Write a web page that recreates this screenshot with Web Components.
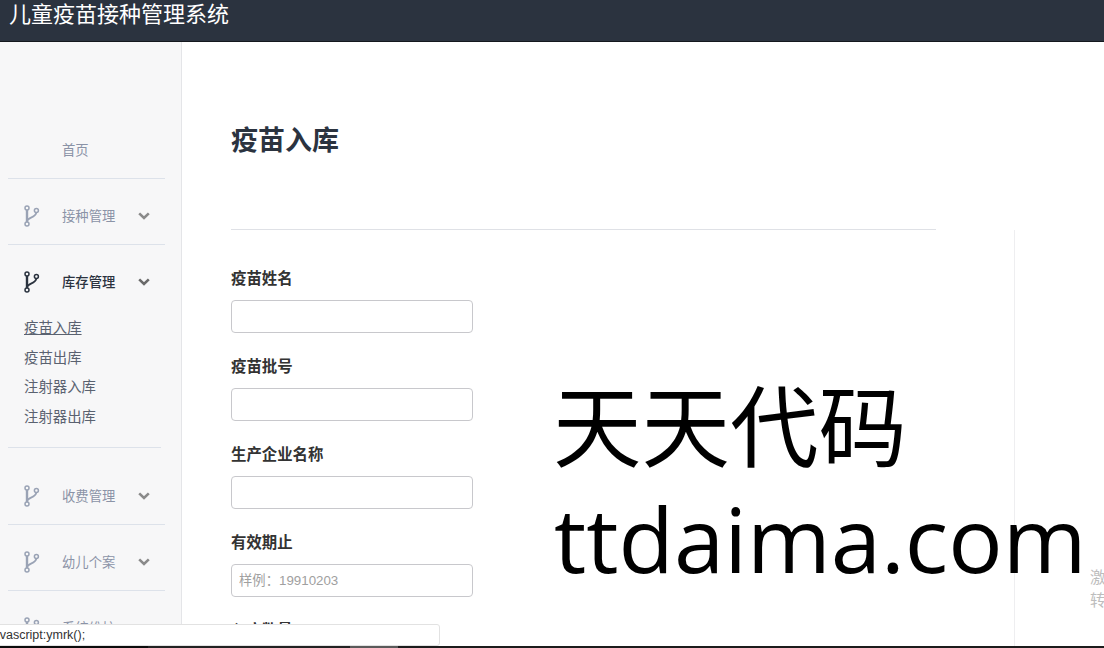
<!DOCTYPE html>
<html lang="zh">
<head>
<meta charset="utf-8">
<title>儿童疫苗接种管理系统</title>
<style>
  html, body { margin: 0; height: 100%; overflow: hidden; background: #fff; }
  body { font-family: "Liberation Sans", "Noto Sans CJK SC", sans-serif; }
</style>
</head>
<body>
<app-shell>
  <top-bar slot="top">儿童疫苗接种管理系统</top-bar>
  <side-nav slot="side">
    <nav-group label="首页" plain></nav-group>
    <nav-group label="接种管理"></nav-group>
    <nav-group label="库存管理" open>
      <a href="#" class="cur">疫苗入库</a>
      <a href="#">疫苗出库</a>
      <a href="#">注射器入库</a>
      <a href="#">注射器出库</a>
    </nav-group>
    <nav-group label="收费管理" spaced low></nav-group>
    <nav-group label="幼儿个案" low></nav-group>
    <nav-group label="系统维护" last low></nav-group>
  </side-nav>
  <stock-form slot="main" heading="疫苗入库">
    <form-field label="疫苗姓名"></form-field>
    <form-field label="疫苗批号"></form-field>
    <form-field label="生产企业名称"></form-field>
    <form-field label="有效期止" placeholder="样例：19910203"></form-field>
    <form-field label="入库数量"></form-field>
  </stock-form>
  <side-note slot="main">激活<br>转到</side-note>
  <water-mark slot="over"></water-mark>
  <status-tip slot="over">javascript:ymrk();</status-tip>
</app-shell>

<script>
const CJK = '"Liberation Sans", "Noto Sans CJK SC", sans-serif';

class AppShell extends HTMLElement {
  constructor() {
    super();
    this.attachShadow({ mode: 'open' });
    this.shadowRoot.innerHTML = `
      <style>
        :host { display: grid; grid-template-rows: 42px 604px 2px; grid-template-columns: 182px 1fr; width: 1104px; height: 648px; overflow: hidden; position: relative; }
        .top { grid-column: 1 / 3; }
        .main { display: flex; min-width: 0; overflow: hidden; }
        /* dark strip along the bottom of the window */
        .edge { grid-column: 1 / 3; background: linear-gradient(to right, #0c0c0c 0, #0c0c0c 148px, #222 148px, #222 350px, #5a5a5a 350px, #5a5a5a 398px, #1c1c1c 398px, #1c1c1c 100%); }
      </style>
      <div class="top"><slot name="top"></slot></div>
      <slot name="side"></slot>
      <div class="main"><slot name="main"></slot></div>
      <div class="edge"></div>
      <slot name="over"></slot>
    `;
  }
}

class TopBar extends HTMLElement {
  constructor() {
    super();
    this.attachShadow({ mode: 'open' });
    this.shadowRoot.innerHTML = `
      <style>
        :host { display: block; height: 42px; box-sizing: border-box; background: #2b333f; border-bottom: 1px solid #14181e; color: #fff; font: 22px/30px ${CJK}; padding-left: 9px; }
      </style>
      <slot></slot>
    `;
  }
}

class SideNav extends HTMLElement {
  constructor() {
    super();
    this.attachShadow({ mode: 'open' });
    this.shadowRoot.innerHTML = `
      <style>
        :host { display: block; box-sizing: border-box; width: 182px; height: 604px; background: #f7f7f8; border-right: 1px solid #e4e5e8; padding-top: 71px; overflow: hidden; }
      </style>
      <slot></slot>
    `;
  }
}

class NavGroup extends HTMLElement {
  constructor() {
    super();
    this.attachShadow({ mode: 'open' });
    const open = this.hasAttribute('open');
    const plain = this.hasAttribute('plain');
    const branch = `
      <svg width="16" height="22" viewBox="0 0 16 22" fill="none" stroke="currentColor" stroke-width="1.5">
        <circle cx="3" cy="3" r="2"/><circle cx="3" cy="19" r="2"/><circle cx="12.4" cy="5.4" r="2"/>
        <path d="M3 5v12" stroke-width="2.4"/><path d="M3 16c.8-3.8 8.6-3 9.4-8.6" stroke-width="1.8"/>
      </svg>`;
    const chevron = `
      <svg width="12" height="8" viewBox="0 0 12 8" fill="none" stroke="currentColor" stroke-width="2.6">
        <path d="M1.2 1.4L6 6l4.8-4.6"/>
      </svg>`;
    this.shadowRoot.innerHTML = `
      <style>
        :host { display: block; margin: 0 16px 0 8px; color: #8b93a7; border-bottom: 1px solid #dde2ea; }
        :host([open]) { color: #2b333f; margin-right: 20px; }
        :host([spaced]) { padding-top: 11px; }
        :host([last]) { border-bottom: 0; }
        .row { display: flex; align-items: center; height: 65px; padding-top: 9px; box-sizing: border-box; font-size: 13.33px; }
        .lab { flex: 1; margin-bottom: 2px; }
        :host([low]) .lab { margin-bottom: 0; }
        :host([open]) .lab { font-weight: 500; }
        .ico { width: 54px; padding-left: 16px; box-sizing: border-box; display: flex; color: #9aa3b5; }
        :host([open]) .ico { color: #2b333f; }
        .chev { color: #8a8a8a; margin-right: ${open ? 11 : 15}px; display: flex; }
        :host([open]) .chev { color: #6a6a6a; }
        .subs { display: ${open ? 'flex' : 'none'}; flex-direction: column; padding: 0 0 14px 16px; margin-top: 4px; }
        ::slotted(a) { font-size: 14.4px; line-height: 29.7px; color: #5a6270; text-decoration: none; }
        ::slotted(a.cur) { text-decoration: underline; }
      </style>
      <div class="row">
        <span class="ico">${plain ? '' : branch}</span>
        <span class="lab">${this.getAttribute('label')}</span>
        ${plain ? '' : `<span class="chev">${chevron}</span>`}
      </div>
      <div class="subs"><slot></slot></div>
    `;
  }
}

class StockForm extends HTMLElement {
  constructor() {
    super();
    this.attachShadow({ mode: 'open' });
    this.shadowRoot.innerHTML = `
      <style>
        :host { display: block; box-sizing: border-box; width: 832px; height: 604px; padding: 0 78px 0 49px; flex: none; overflow: hidden; }
        h1 { margin: 0; padding-top: 82px; height: 105px; font: bold 27px/34px ${CJK}; color: #2b333f; border-bottom: 1px solid #dfe1e6; }
        .fields { display: flex; flex-direction: column; gap: 24px; padding-top: 39px; }
      </style>
      <h1>${this.getAttribute('heading')}</h1>
      <div class="fields"><slot></slot></div>
    `;
  }
}

class FormField extends HTMLElement {
  constructor() {
    super();
    this.attachShadow({ mode: 'open' });
    const ph = this.getAttribute('placeholder') || '';
    this.shadowRoot.innerHTML = `
      <style>
        :host { display: block; }
        label { display: block; font: bold 15.4px/20px ${CJK}; color: #333; margin-bottom: 11px; }
        input { display: block; box-sizing: border-box; width: 242px; height: 33px; border: 1px solid #c8c8cc; border-radius: 4px; padding: 0 7px; font: 13.33px ${CJK}; background: #fff; outline: 0; }
        input::placeholder { color: #a0a0a0; opacity: 1; }
      </style>
      <label>${this.getAttribute('label')}</label>
      <input type="text" placeholder="${ph}">
    `;
  }
}

class SideNote extends HTMLElement {
  constructor() {
    super();
    this.attachShadow({ mode: 'open' });
    this.shadowRoot.innerHTML = `
      <style>
        :host { display: block; flex: none; box-sizing: border-box; width: 90px; height: 416px; margin-top: 188px; padding: 336px 0 0 75px; border-left: 1px solid #eeeef0; font: 15.5px/23px ${CJK}; color: #bdbdbd; white-space: nowrap; }
      </style>
      <slot></slot>
    `;
  }
}

class WaterMark extends HTMLElement {
  constructor() {
    super();
    this.attachShadow({ mode: 'open' });
    this.shadowRoot.innerHTML = `
      <style>
        :host { position: absolute; left: 553px; top: 363px; color: #000; white-space: nowrap; pointer-events: none; }
        div { font: 88.5px/116px "Noto Sans CJK SC", sans-serif; }
        .url { font: 90.5px/108px "Open Sans", sans-serif; margin: 5px 0 0 1px; }
      </style>
      <div>天天代码</div>
      <div class="url">ttdaima.com</div>
    `;
  }
}

class StatusTip extends HTMLElement {
  constructor() {
    super();
    this.attachShadow({ mode: 'open' });
    this.shadowRoot.innerHTML = `
      <style>
        :host { position: absolute; left: -12px; top: 624px; width: 452px; height: 22px; box-sizing: border-box; padding-left: 1px; background: #fff; border: 1px solid #e2e2e2; border-radius: 3px; font: 12.5px/21px ${CJK}; color: #333; white-space: nowrap; }
      </style>
      <slot></slot>
    `;
  }
}

customElements.define('app-shell', AppShell);
customElements.define('top-bar', TopBar);
customElements.define('side-nav', SideNav);
customElements.define('nav-group', NavGroup);
customElements.define('stock-form', StockForm);
customElements.define('form-field', FormField);
customElements.define('side-note', SideNote);
customElements.define('water-mark', WaterMark);
customElements.define('status-tip', StatusTip);
</script>
</body>
</html>
